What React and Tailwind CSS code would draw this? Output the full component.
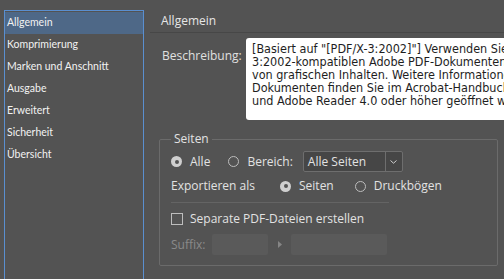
import React from 'react';

const navItems = [
  'Allgemein',
  'Komprimierung',
  'Marken und Anschnitt',
  'Ausgabe',
  'Erweitert',
  'Sicherheit',
  'Übersicht',
];

const ui = { fontFamily: '"Open Sans", "Noto Sans", sans-serif' };
const nav = { fontFamily: 'Lato, "Open Sans", sans-serif' };
const desc = { fontFamily: '"DejaVu Sans Condensed", "DejaVu Sans", sans-serif' };

// small round radio like in the InDesign dialog
const Radio = ({ checked }) => (
  <span
    className={`w-[11px] h-[11px] rounded-full shrink-0 flex items-center justify-center ${
      checked ? 'bg-[#cfcfcf]' : 'border border-[#bdbdbd]'
    }`}
  >
    {checked && <span className="w-[4px] h-[4px] rounded-full bg-[#535353]"></span>}
  </span>
);

const App = () => {
  return (
    <div className="w-[504px] h-[279px] bg-[#535353] flex overflow-hidden" style={ui}>
      {/* SIDEBAR */}
      <div className="ml-[4px] mt-[10px] w-[140px] shrink-0 border-l border-t border-r border-[#5a8fd0] pt-px" style={nav}>
        {navItems.map((item, i) => (
          <div
            key={item}
            className={`h-[22px] pl-[2px] flex items-center text-[10.5px] text-[#f2f2f2] ${
              i === 0 ? 'bg-[#4e6887]' : ''
            }`}
          >
            {item}
          </div>
        ))}
      </div>

      {/* MAIN */}
      <div className="ml-[6px] flex-1 min-w-0 overflow-hidden text-[12px]">
        <div className="h-[33px] pt-[10px] pl-[11px] flex items-center border-b border-[#474747] text-[#e6e6e6]">
          Allgemein
        </div>

        <div className="mt-[5px] flex">
          <div className="w-[96px] shrink-0 pl-[12px] pt-[11px] leading-[14px] text-[#e0e0e0]">
            Beschreibung:
          </div>
          <div
            className="w-[320px] h-[82px] shrink-0 bg-white rounded-[3px] pl-[6px] pt-[4px] text-[12.5px] leading-[13px] text-[#1e1e1e] whitespace-nowrap overflow-hidden"
            style={desc}
          >
            <div>[Basiert auf "[PDF/X-3:2002]"] Verwenden Sie diese</div>
            <div>3:2002-kompatiblen Adobe PDF-Dokumenten. PDF/X-3</div>
            <div>von grafischen Inhalten. Weitere Informationen zum</div>
            <div>Dokumenten finden Sie im Acrobat-Handbuch. Die</div>
            <div>und Adobe Reader 4.0 oder höher geöffnet werden.</div>
          </div>
        </div>

        {/* SEITEN GROUP */}
        <fieldset className="mt-[12px] ml-[9px] w-[339px] border border-[#6b6b6b] rounded-[2px] pl-[11px] pt-[5px] pb-[10px] text-[#e2e2e2]">
          <legend className="px-[3px] leading-[14px]">Seiten</legend>

          <div className="h-[21px] flex items-center">
            <Radio checked />
            <span className="ml-[8px]">Alle</span>
            <span className="ml-[18px]"><Radio /></span>
            <span className="ml-[8px]">Bereich:</span>
            <div className="ml-[10px] w-[100px] h-[21px] flex border border-[#6e6e6e] rounded-[2px] bg-[#464646]">
              <span className="flex-1 pl-[4px] flex items-center">Alle Seiten</span>
              <span className="w-[17px] border-l border-[#6e6e6e] flex items-center justify-center">
                <svg width="7" height="4" viewBox="0 0 7 4">
                  <path d="M0.5 0.5 L3.5 3.2 L6.5 0.5" fill="none" stroke="#cfcfcf" strokeWidth="1" />
                </svg>
              </span>
            </div>
          </div>

          <div className="mt-[4px] h-[20px] flex items-center">
            <span className="w-[109px]">Exportieren als</span>
            <Radio checked />
            <span className="ml-[8px]">Seiten</span>
            <span className="ml-[21px]"><Radio /></span>
            <span className="ml-[8px]">Druckbögen</span>
          </div>

          <div className="mt-[6px] w-[218px] h-px bg-[#646464]"></div>

          <div className="mt-[9px] h-[14px] flex items-center">
            <span className="w-[12px] h-[12px] border border-[#bdbdbd] shrink-0"></span>
            <span className="ml-[7px]">Separate PDF-Dateien erstellen</span>
          </div>

          <div className="mt-[8px] h-[21px] flex items-center text-[#8a8a8a]">
            <span className="w-[41px]">Suffix:</span>
            <span className="w-[56px] h-[21px] bg-[#5a5a5a] rounded-[2px]"></span>
            <span className="ml-[10px] w-[13px]">
              <svg width="4" height="7" viewBox="0 0 4 7">
                <path d="M0 0 L4 3.5 L0 7 Z" fill="#858585" />
              </svg>
            </span>
            <span className="w-[96px] h-[21px] bg-[#5a5a5a] rounded-[2px]"></span>
          </div>
        </fieldset>
      </div>
    </div>
  );
};

export default App;
